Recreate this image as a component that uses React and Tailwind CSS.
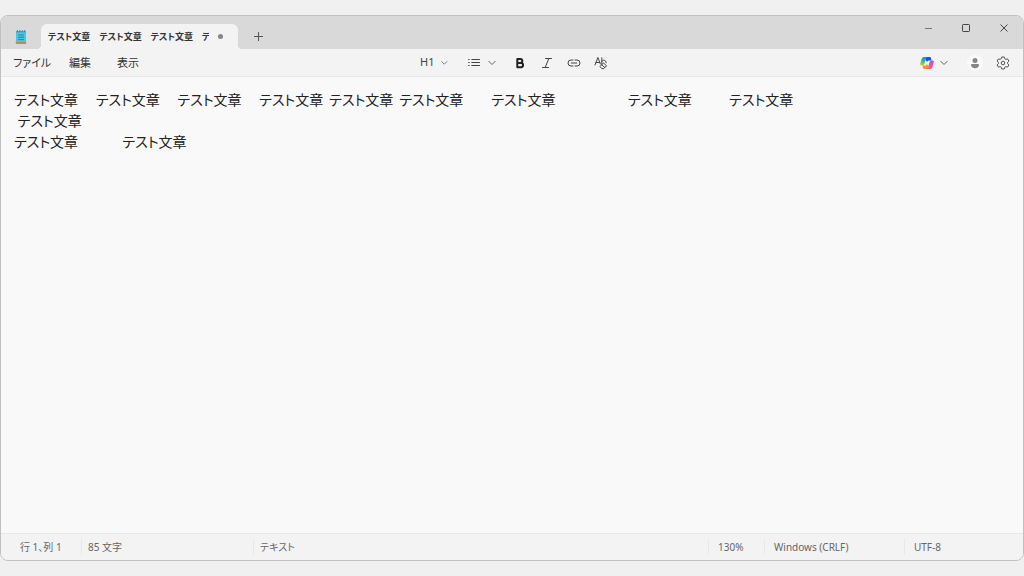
import React from 'react';

const documentText = [
    'テスト文章　 テスト文章　 テスト文章　 テスト文章 \u2006テスト文章 \u2006テスト文章　　テスト文章　　　　　\u2006テスト文章　　\u2002\u2006テスト文章',
    ' テスト文章',
    'テスト文章　　　\u2006テスト文章',
].join('\n');

function Chevron() {
    return (
        <svg className="w-2 h-2" viewBox="0 0 8 8" fill="none" stroke="#666666" strokeLinecap="round" strokeLinejoin="round" aria-hidden="true">
            <path d="M.8 2.300 4 5.500 7.200 2.300" />
        </svg>
    );
}

function NotepadIcon() {
    return (
        <svg className="w-3 h-4" viewBox="0 0 12 16" aria-hidden="true">
            <path d="M.8 12h10.400v2.200a.8.8 0 0 1-.8.8H1.600a.8.8 0 0 1-.8-.8z" fill="#c98550" />
            <path d="M1 2h10v11H1z" fill="#4cc4e4" />
            <path d="M1 2h10v1.500H1z" fill="#35aed2" />
            <path d="M2.500 1v1.800M4.800 1v1.800M7.200 1v1.800M9.500 1v1.800" stroke="#3a7f98" strokeWidth=".8" />
            <path d="M3 6h6M3 8.300h6M3 10.600h6" stroke="#1f8db4" strokeWidth="1" />
        </svg>
    );
}

function CopilotIcon() {
    return (
        <svg className="w-3.5 h-3.5" viewBox="0 0 14 14" aria-hidden="true">
            <defs>
                <linearGradient id="cool" x1="0" y1="0" x2="0" y2="1">
                    <stop offset="0" stopColor="#1b8cf0" />
                    <stop offset=".45" stopColor="#28b5b0" />
                    <stop offset=".75" stopColor="#8fc740" />
                    <stop offset="1" stopColor="#f4c20d" />
                </linearGradient>
                <linearGradient id="warm" x1="1" y1="0" x2="0" y2="1">
                    <stop offset="0" stopColor="#9b5cf0" />
                    <stop offset=".5" stopColor="#e8529c" />
                    <stop offset="1" stopColor="#ff7a4c" />
                </linearGradient>
            </defs>
            <path d="M6 1h3.600c.8 0 1.200.5 1.400 1.200l.6 2.300H9.200C8 4.500 7.500 5 7.100 6L5 3z" fill="#1a56c9" />
            <path d="M8 13H4.400c-.8 0-1.200-.5-1.400-1.200l-.7-2.300h2.500c1.200 0 1.700-.5 2.100-1.500L9 11z" fill="#ff8a3c" />
            <path d="M4.200 1h3.300c-.9.200-1.300.9-1.600 1.900L4.500 7.700c-.4 1.200-1 1.800-2.200 1.800H1.700C.4 9.500-.1 8.500.3 7.400l1.300-4.300C2.100 1.600 3 1 4.200 1z" fill="url(#cool)" />
            <path d="M9.800 13H6.500c.9-.2 1.300-.9 1.600-1.900l1.400-4.800c.4-1.200 1-1.800 2.200-1.800h.6c1.300 0 1.800 1 1.400 2.100l-1.300 4.300C11.900 12.400 11 13 9.800 13z" fill="url(#warm)" />
        </svg>
    );
}

function ToolButton({ label, className, children }) {
    return (
        <button type="button" aria-label={label} className={`h-5 flex items-center justify-center ${className}`}>
            {children}
        </button>
    );
}

function TitleBar() {
    return (
        <header className="h-[33px] shrink-0 flex items-end bg-[#d9d9d9]">
            <div className="w-10 h-[25px] flex items-center justify-center">
                <NotepadIcon />
            </div>
            <div
                role="tablist"
                className="relative w-[197px] h-[25px] px-[7px] flex items-center bg-[#f3f3f3] rounded-t-md before:absolute before:bottom-0 before:-left-1 before:size-1 before:bg-[radial-gradient(circle_at_0_0,transparent_4px,#f3f3f3_4px)] after:absolute after:bottom-0 after:-right-1 after:size-1 after:bg-[radial-gradient(circle_at_100%_0,transparent_4px,#f3f3f3_4px)]"
            >
                <button type="button" role="tab" aria-selected="true" className="w-[161px] overflow-hidden whitespace-pre text-left text-[9px] leading-4 font-bold text-[#333333]">
                    テスト文章　テスト文章　テスト文章　テスト文章
                </button>
                <span className="ml-[9px] size-[5px] rounded-full bg-[#858585]" />
            </div>
            <button type="button" aria-label="新しいタブ" className="w-10 h-[25px] flex items-center justify-center">
                <svg className="w-[9px] h-[9px]" viewBox="0 0 9 9" stroke="#555555" aria-hidden="true">
                    <path d="M0 4.500h9M4.500 0v9" />
                </svg>
            </button>
            <div className="ml-auto self-start flex text-[#444444]">
                <button type="button" aria-label="最小化" className="w-[38px] h-6 flex items-center justify-center">
                    <svg className="w-[7px] h-[7px]" viewBox="0 0 7 7" stroke="#777777" aria-hidden="true">
                        <path d="M0 3.500h7" />
                    </svg>
                </button>
                <button type="button" aria-label="最大化" className="w-[38px] h-6 flex items-center justify-center">
                    <svg className="w-2 h-2" viewBox="0 0 8 8" fill="none" stroke="currentColor" aria-hidden="true">
                        <rect x=".5" y=".5" width="7" height="7" rx=".7" />
                    </svg>
                </button>
                <button type="button" aria-label="閉じる" className="w-[38px] h-6 flex items-center justify-center">
                    <svg className="w-2 h-2" viewBox="0 0 8 8" stroke="currentColor" aria-hidden="true">
                        <path d="m.5.5 7 7M7.500.5l-7 7" />
                    </svg>
                </button>
            </div>
        </header>
    );
}

function MenuBar() {
    return (
        <div className="h-7 shrink-0 grid grid-cols-[1fr_auto_1fr] items-center bg-[#f3f3f3] border-b border-[#e8e8e8]">
            <nav className="pl-3 flex text-[11px] leading-4 text-[#333333]">
                <button type="button" className="w-14 text-left">ファイル</button>
                <button type="button" className="w-12 text-left">編集</button>
                <button type="button" className="w-12 text-left">表示</button>
            </nav>

            <div className="pl-2.5 flex items-center text-[#444444]">
                <ToolButton label="見出し" className="w-7 gap-[7px] text-[11px]">
                    <span>H1</span>
                    <Chevron />
                </ToolButton>
                <ToolButton label="リスト" className="ml-5 w-7 gap-2">
                    <svg className="w-3 h-2.5" viewBox="0 0 12 10" stroke="currentColor" strokeLinecap="round" aria-hidden="true">
                        <path d="M.6 1.500h.6M.6 4.500h.6M.6 7.500h.6M3.800 1.500h7.700M3.800 4.500h7.700M3.800 7.500h7.700" />
                    </svg>
                    <Chevron />
                </ToolButton>
                <ToolButton label="太字" className="ml-2.5 w-[27px]">
                    <svg className="w-2.5 h-3" viewBox="0 0 10 12" fill="none" stroke="#222222" strokeWidth="2" strokeLinejoin="round" aria-hidden="true">
                        <path d="M2.300 2h3a2 2 0 0 1 0 4h-3zM2.300 6h3.700a2.100 2.100 0 0 1 0 4.200H2.300z" />
                    </svg>
                </ToolButton>
                <ToolButton label="斜体" className="w-[27px]">
                    <svg className="w-3 h-3" viewBox="0 0 12 12" fill="none" stroke="currentColor" strokeLinecap="round" aria-hidden="true">
                        <path d="M4.500 1.500h6M1.500 10.500h6M7.800 1.500l-3.600 9" />
                    </svg>
                </ToolButton>
                <ToolButton label="リンク" className="w-[27px]">
                    <svg className="w-3.5 h-3" viewBox="0 0 14 12" fill="none" stroke="currentColor" strokeLinecap="round" aria-hidden="true">
                        <path d="M6 3H4a3 3 0 0 0 0 6h2M8 3h2a3 3 0 0 1 0 6H8M4.300 6h5.400" />
                    </svg>
                </ToolButton>
                <ToolButton label="書式のクリア" className="w-[27px]">
                    <svg className="w-3.5 h-3.5" viewBox="0 0 14 14" fill="none" stroke="currentColor" strokeLinecap="round" strokeLinejoin="round" aria-hidden="true">
                        <path d="M1 9 3.900 1.500 6.400 8M2 6.500h3.700M7.800 1.800v6M7.800 5.500c.5-1 1.400-1.400 2.300-1.300 1.400.1 2.100 1.300 2 2.600" />
                        <path d="m6.300 10.200 3.200-3.300 3 2.900-2.700 2.800H8.200zM7.700 8.700l3.200 3" />
                    </svg>
                </ToolButton>
            </div>

            <div className="pr-[13px] flex items-center justify-end">
                <ToolButton label="Copilot" className="w-7 gap-1.5">
                    <CopilotIcon />
                    <Chevron />
                </ToolButton>
                <ToolButton label="アカウント" className="ml-[19px] w-4">
                    <svg className="w-4 h-4" viewBox="0 0 16 16" aria-hidden="true">
                        <circle cx="8" cy="8" r="8" fill="#fafafa" />
                        <circle cx="8" cy="5.500" r="2.500" fill="#858585" />
                        <path d="M5 9h6a1 1 0 0 1 1 1c0 2-1.700 3.200-4 3.200S4 12 4 10a1 1 0 0 1 1-1z" fill="#858585" />
                    </svg>
                </ToolButton>
                <ToolButton label="設定" className="ml-[13px] w-3.5">
                    <svg className="w-3.5 h-3.5" viewBox="0 0 14 14" fill="none" stroke="#555555" strokeLinejoin="round" aria-hidden="true">
                        <path d="M5.700 1h2.600l.4 1.700 1.200.7 1.700-.5 1.300 2.200L11.600 6.300v1.400l1.300 1.200-1.300 2.200-1.700-.5-1.200.7L8.300 13H5.700l-.4-1.700-1.200-.7-1.700.5L1.100 8.900l1.300-1.200V6.300L1.100 5.100l1.300-2.200 1.700.5 1.200-.7z" />
                        <circle cx="7" cy="7" r="1.800" />
                    </svg>
                </ToolButton>
            </div>
        </div>
    );
}

function StatusBar() {
    return (
        <footer className="h-[27px] shrink-0 flex items-center bg-[#f3f3f3] border-t border-[#e8e8e8] text-[10px] leading-4 text-[#666666]">
            <span className="w-20 pl-[19px]">行 1、列 1</span>
            <span className="w-[172px] pl-1.5 border-l border-[#e8e8e8]">85 文字</span>
            <span className="flex-1 pl-1.5 border-l border-[#e8e8e8]">テキスト</span>
            <span className="w-14 pl-[9px] border-l border-[#e8e8e8]">130%</span>
            <span className="w-[140px] pl-[9px] border-l border-[#e8e8e8]">Windows (CRLF)</span>
            <span className="w-[119px] pl-[9px] border-l border-[#e8e8e8]">UTF-8</span>
        </footer>
    );
}

export default function App() {
    return (
        <div className="h-screen py-[15px] bg-[#f0f0f0] font-['Noto_Sans','Noto_Sans_CJK_JP',sans-serif] [font-feature-settings:'palt']">
            <div className="h-full flex flex-col overflow-hidden rounded-lg border border-[#c0c0c0] bg-[#f9f9f9]">
                <TitleBar />
                <MenuBar />
                <textarea
                    aria-label="テキスト エディター"
                    spellCheck={false}
                    defaultValue={documentText}
                    className="flex-1 w-full px-[13px] py-3 resize-none outline-none bg-transparent whitespace-pre overflow-hidden text-[14px] leading-[21px] text-[#222222]"
                />
                <StatusBar />
            </div>
        </div>
    );
}
